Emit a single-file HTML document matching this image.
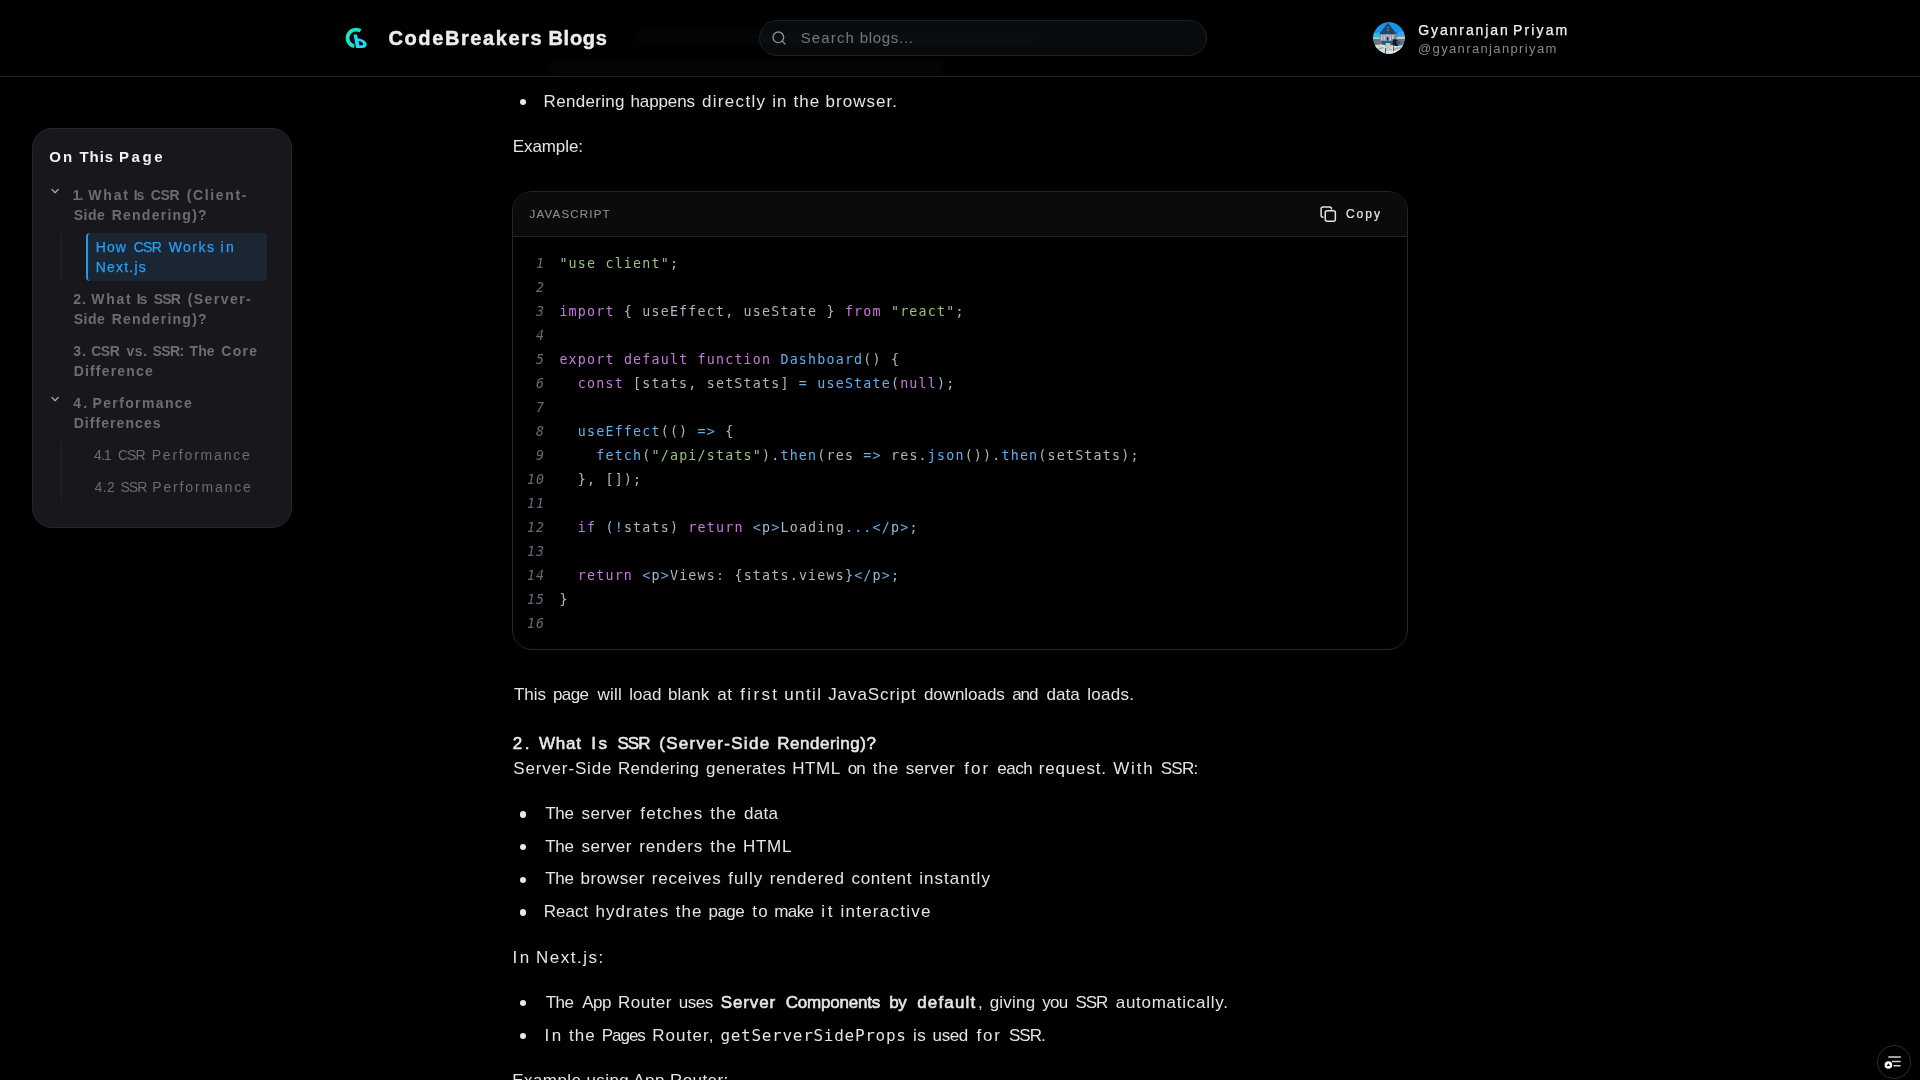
<!DOCTYPE html>
<html lang="en">
<head>
<meta charset="utf-8">
<title>CodeBreakers Blogs</title>
<style>
*{box-sizing:border-box;margin:0;padding:0}
html,body{width:1920px;height:1080px;overflow:hidden;background:#000;color:#ececec;font-family:"Liberation Sans",sans-serif}
body{position:relative}
header{position:absolute;left:0;top:0;width:1920px;height:77px;border-bottom:1px solid #1f2023}
header,main,aside,.fab{will-change:transform}
.ab{position:absolute;white-space:nowrap}
a{color:inherit;text-decoration:none}
ul{list-style:none}
.logo{position:absolute;left:336px;top:18px;width:40px;height:40px}
.brand{font-weight:700;font-size:20px;line-height:24px;color:#ededed;-webkit-text-stroke:.45px #ededed}
.search{position:absolute;left:759px;top:20px;width:448px;height:36px;border:1px solid #1d2025;border-radius:18px;background:rgba(20,27,35,.4)}
.search svg{position:absolute;left:11px;top:9px;width:16px;height:16px}
.srch{font-size:15px;line-height:22px;color:#74787d}
.avatar{position:absolute;left:1373px;top:22px;width:32px;height:32px;border-radius:50%}
.uname{font-size:14px;line-height:20px;color:#f0f0f0;-webkit-text-stroke:.25px #f0f0f0}
.uhandle{font-size:13px;line-height:16px;color:#88888c}
aside{position:absolute;left:32px;top:128px;width:260px;height:400px;border:1px solid #27282c;border-radius:20px;background:#18181c}
.h2{font-size:15px;line-height:24px;font-weight:700;color:#f2f2f2}
.toc{font-size:14px;line-height:20px;font-weight:700;color:#6d6d72}
.toc.sub{font-weight:400;color:#6b6b70}
.toc.act{font-weight:400;color:#2a9df4;-webkit-text-stroke:.25px #2a9df4}
.chev{position:absolute;width:10px;height:8px}
.vline{position:absolute;left:28px;width:1px;background:#222226}
.active{position:absolute;left:53px;top:104px;width:181px;height:48px;border-left:2px solid #1d9bf0;border-radius:4px;background:#1a2633}
main{position:absolute;left:512px;top:0;width:896px;height:1080px;font-size:17px;color:#e4e4e4}
main .t,main .li{white-space:pre;line-height:24px;font-size:17px;font-weight:400}
main .li::before{content:"";position:absolute;left:-24.65px;top:9.3px;width:6.4px;height:6.4px;border-radius:50%;background:#e8e8e8}
.w{position:absolute;top:0;white-space:pre}
main .hd{font-weight:400;-webkit-text-stroke:.55px #ececec}
main .inl{font-family:"DejaVu Sans Mono","Liberation Mono",monospace;font-size:16px}
.cb{position:absolute;left:0;top:191px;width:896px;height:459px;border:1px solid #25262a;border-radius:20px;background:#000;overflow:hidden}
.cbh{position:absolute;left:0;top:0;width:894px;height:45px;border-bottom:1px solid #25262a;background:#0a0b0c}
.lang{font-size:11.5px;line-height:14px;color:#8a8b90;-webkit-text-stroke:.15px #8a8b90}
.copy{position:absolute;left:806.5px;top:13.5px;width:17px;height:17px}
.copyt{font-size:12px;line-height:16px;color:#e6e6e6;-webkit-text-stroke:.2px #e6e6e6}
pre{position:absolute;left:12px;top:59.5px;font-family:"DejaVu Sans Mono","Liberation Mono",monospace;font-size:13.3px;letter-spacing:1.203px;line-height:24px;color:#b0b6c0;white-space:pre}
pre code{font-family:inherit}
pre .n{display:inline-block;width:34.4px;padding-right:14.1px;text-align:right;font-style:italic;color:#646b78}
.k{color:#c678dd}.s{color:#98c379}.f{color:#61afef}.o{color:#61afef}
.smudge{position:absolute;background:rgba(255,255,255,.022);filter:blur(3px);border-radius:6px}
.fab{position:absolute;left:1877px;top:1045px;width:34px;height:34px;border:1px solid #2b2c31;border-radius:50%;background:#000}
.fab svg{position:absolute;left:0;top:0;width:32px;height:32px}
</style>
</head>
<body>
<main>
<article>
<ul>
<li id="p0" class="ab li" style="left:32.50px;top:89.60px"><span class="w" style="left:-0.90px;letter-spacing:0.314px">Rendering </span><span class="w" style="left:86.00px;letter-spacing:-0.121px">happens </span><span class="w" style="left:157.40px;letter-spacing:1.336px">directly </span><span class="w" style="left:227.70px;letter-spacing:1.023px">in </span><span class="w" style="left:248.90px;letter-spacing:1.111px">the </span><span class="w" style="left:281.10px;letter-spacing:1.011px">browser.</span></li>
</ul>
<p id="p1" class="ab t" style="left:0.70px;top:134.70px;letter-spacing:-0.068px">Example:</p>
<section class="cb">
<div class="cbh">
<span id="lang" class="ab lang" style="left:16.60px;top:14.85px;letter-spacing:1.196px">JAVASCRIPT</span>
<span id="copyt" class="ab copyt" style="left:832.90px;top:14.00px;letter-spacing:2.028px">Copy</span>
<svg class="copy" viewBox="0 0 17 17" fill="none" stroke="#e4e4e4" stroke-width="1.5" stroke-linejoin="round" stroke-linecap="round"><rect x="5.25" y="4.85" width="10.1" height="10.3" rx="2" fill="#0a0b0c"/><path d="M3 11.2c-1.1 0-1.9-.8-1.9-1.9V2.9c0-1.1.8-1.9 1.9-1.9h6.6c1.1 0 1.9.8 1.9 1.9"/></svg>
</div>
<pre><code><span class="n">1</span><span class="s">"use client"</span>;
<span class="n">2</span>
<span class="n">3</span><span class="k">import</span> { useEffect, useState } <span class="k">from</span> <span class="s">"react"</span>;
<span class="n">4</span>
<span class="n">5</span><span class="k">export</span> <span class="k">default</span> <span class="k">function</span> <span class="f">Dashboard</span>() {
<span class="n">6</span>  <span class="k">const</span> [stats, setStats] <span class="o">=</span> <span class="f">useState</span>(<span class="k">null</span>);
<span class="n">7</span>
<span class="n">8</span>  <span class="f">useEffect</span>(() <span class="o">=&gt;</span> {
<span class="n">9</span>    <span class="f">fetch</span>(<span class="s">"/api/stats"</span>).<span class="f">then</span>(res <span class="o">=&gt;</span> res.<span class="f">json</span>()).<span class="f">then</span>(setStats);
<span class="n">10</span>  }, []);
<span class="n">11</span>
<span class="n">12</span>  <span class="k">if</span> (<span class="o">!</span>stats) <span class="k">return</span> <span class="o">&lt;</span>p<span class="o">&gt;</span>Loading<span class="o">...</span><span class="o">&lt;/</span>p<span class="o">&gt;</span>;
<span class="n">13</span>
<span class="n">14</span>  <span class="k">return</span> <span class="o">&lt;</span>p<span class="o">&gt;</span>Views<span class="o">:</span> {stats.views}<span class="o">&lt;/</span>p<span class="o">&gt;</span>;
<span class="n">15</span>}
<span class="n">16</span></code></pre>
</section>
<p id="p2" class="ab t" style="left:0.00px;top:682.50px"><span class="w" style="left:1.95px;letter-spacing:-0.005px">This </span><span class="w" style="left:40.95px;letter-spacing:-0.588px">page </span><span class="w" style="left:85.45px;letter-spacing:0.256px">will </span><span class="w" style="left:117.20px;letter-spacing:0.055px">load </span><span class="w" style="left:155.95px;letter-spacing:0.177px">blank </span><span class="w" style="left:205.20px;letter-spacing:0.645px">at </span><span class="w" style="left:228.20px;letter-spacing:2.360px">first </span><span class="w" style="left:272.20px;letter-spacing:1.423px">until </span><span class="w" style="left:316.20px;letter-spacing:0.912px">JavaScript </span><span class="w" style="left:411.95px;letter-spacing:-0.054px">downloads </span><span class="w" style="left:500.17px;letter-spacing:-1.000px">and </span><span class="w" style="left:534.45px;letter-spacing:0.073px">data </span><span class="w" style="left:575.20px;letter-spacing:0.272px">loads.</span></p>
<h3 id="p3" class="ab t hd" style="left:0.00px;top:732.00px"><span class="w" style="left:0.70px;letter-spacing:2.595px">2. </span><span class="w" style="left:26.95px;letter-spacing:0.782px">What </span><span class="w" style="left:79.19px;letter-spacing:2.600px">Is </span><span class="w" style="left:105.51px;letter-spacing:-1.000px">SSR </span><span class="w" style="left:147.20px;letter-spacing:1.326px">(Server-Side </span><span class="w" style="left:265.20px;letter-spacing:0.520px">Rendering)?</span></h3>
<p id="p4" class="ab t" style="left:0.00px;top:756.70px"><span class="w" style="left:1.20px;letter-spacing:0.855px">Server-Side </span><span class="w" style="left:105.95px;letter-spacing:0.327px">Rendering </span><span class="w" style="left:193.95px;letter-spacing:0.530px">generates </span><span class="w" style="left:280.20px;letter-spacing:0.593px">HTML </span><span class="w" style="left:335.77px;letter-spacing:-1.000px">on </span><span class="w" style="left:360.70px;letter-spacing:0.961px">the </span><span class="w" style="left:393.70px;letter-spacing:0.356px">server </span><span class="w" style="left:452.20px;letter-spacing:2.086px">for </span><span class="w" style="left:485.20px;letter-spacing:-0.436px">each </span><span class="w" style="left:526.70px;letter-spacing:0.842px">request. </span><span class="w" style="left:601.20px;letter-spacing:1.852px">With </span><span class="w" style="left:648.70px;letter-spacing:-0.685px">SSR:</span></p>
<ul>
<li id="p5" class="ab li" style="left:32.50px;top:801.90px"><span class="w" style="left:0.70px;letter-spacing:-0.244px">The </span><span class="w" style="left:36.95px;letter-spacing:0.556px">server </span><span class="w" style="left:95.70px;letter-spacing:1.215px">fetches </span><span class="w" style="left:165.70px;letter-spacing:1.086px">the </span><span class="w" style="left:199.45px;letter-spacing:0.273px">data</span></li>
<li id="p6" class="ab li" style="left:32.50px;top:834.50px"><span class="w" style="left:0.70px;letter-spacing:-0.244px">The </span><span class="w" style="left:36.95px;letter-spacing:0.556px">server </span><span class="w" style="left:94.70px;letter-spacing:0.910px">renders </span><span class="w" style="left:165.70px;letter-spacing:1.086px">the </span><span class="w" style="left:198.45px;letter-spacing:0.759px">HTML</span></li>
<li id="p7" class="ab li" style="left:32.50px;top:867.40px"><span class="w" style="left:0.70px;letter-spacing:-0.244px">The </span><span class="w" style="left:35.95px;letter-spacing:0.591px">browser </span><span class="w" style="left:107.20px;letter-spacing:0.828px">receives </span><span class="w" style="left:183.70px;letter-spacing:0.967px">fully </span><span class="w" style="left:225.20px;letter-spacing:0.894px">rendered </span><span class="w" style="left:306.95px;letter-spacing:0.718px">content </span><span class="w" style="left:374.70px;letter-spacing:1.042px">instantly</span></li>
<li id="p8" class="ab li" style="left:32.50px;top:900.00px"><span class="w" style="left:-0.80px;letter-spacing:0.041px">React </span><span class="w" style="left:50.95px;letter-spacing:1.092px">hydrates </span><span class="w" style="left:131.20px;letter-spacing:1.086px">the </span><span class="w" style="left:163.95px;letter-spacing:-0.505px">page </span><span class="w" style="left:207.70px;letter-spacing:1.377px">to </span><span class="w" style="left:229.70px;letter-spacing:-0.589px">make </span><span class="w" style="left:276.81px;letter-spacing:2.600px">it </span><span class="w" style="left:295.95px;letter-spacing:1.253px">interactive</span></li>
</ul>
<p id="p9" class="ab t" style="left:0.00px;top:945.60px"><span class="w" style="left:0.41px;letter-spacing:2.600px">In </span><span class="w" style="left:24.10px;letter-spacing:1.478px">Next.js:</span></p>
<ul>
<li id="p10" class="ab li" style="left:32.50px;top:990.70px"><span class="w" style="left:1.20px;letter-spacing:-0.494px">The </span><span class="w" style="left:37.70px;letter-spacing:-0.472px">App </span><span class="w" style="left:73.45px;letter-spacing:0.497px">Router </span><span class="w" style="left:134.20px;letter-spacing:-0.436px">uses </span><b class="hd"><span class="w" style="left:176.20px;letter-spacing:0.878px">Server </span><span class="w" style="left:241.20px;letter-spacing:-0.204px">Components </span><span class="w" style="left:344.70px;letter-spacing:-0.405px">by </span><span class="w" style="left:372.70px;letter-spacing:1.164px">default</span></b><span class="w" style="left:433.45px;letter-spacing:0.000px">, </span><span class="w" style="left:445.20px;letter-spacing:0.227px">giving </span><span class="w" style="left:497.70px;letter-spacing:-0.677px">you </span><span class="w" style="left:530.91px;letter-spacing:-1.000px">SSR </span><span class="w" style="left:571.20px;letter-spacing:0.735px">automatically.</span></li>
<li id="p11" class="ab li" style="left:32.50px;top:1023.50px"><span class="w" style="left:-0.04px;letter-spacing:2.600px">In </span><span class="w" style="left:24.45px;letter-spacing:1.086px">the </span><span class="w" style="left:57.15px;letter-spacing:-1.000px">Pages </span><span class="w" style="left:107.70px;letter-spacing:1.086px">Router, </span><code class="w inl" style="left:175.90px;letter-spacing:0.714px">getServerSideProps </code><span class="w" style="left:368.45px;letter-spacing:0.573px">is </span><span class="w" style="left:388.10px;letter-spacing:-0.403px">used </span><span class="w" style="left:431.95px;letter-spacing:1.836px">for </span><span class="w" style="left:464.45px;letter-spacing:-0.968px">SSR.</span></li>
</ul>
<p id="p12" class="ab t" style="left:0.30px;top:1068.50px;letter-spacing:0.412px">Example using App Router:</p>
</article>
</main>
<header>
<div class="smudge" style="left:636px;top:32px;width:402px;height:11px"></div>
<div class="smudge" style="left:550px;top:63px;width:394px;height:11px"></div>
<svg class="logo" viewBox="0 0 40 40"><path d="M24.5 12.9A8.4 8.4 0 1 0 18.3 28.2" fill="none" stroke="#1de4c0" stroke-width="3.7"/><path d="M17.5 16.4h3.5l.9 4c3.6 0 8.8 2.3 8.8 6 0 2.4-2 3.5-4.3 3.5h-6.3zM22.6 22.9l.9 4.3h2.4c1.3 0 1.6-1.2.9-2-.9-1.1-2.5-2-4.2-2.3z" fill="#20d8f4" fill-rule="evenodd"/></svg>
<div class="search"><svg viewBox="0 0 24 24" fill="none" stroke="#8c9095" stroke-width="2" stroke-linecap="round"><circle cx="11" cy="11" r="8"/><path d="M21 21l-4.3-4.3"/></svg></div>
<svg class="avatar" viewBox="0 0 32 32"><defs><clipPath id="ac"><circle cx="16" cy="16" r="16"/></clipPath></defs><g clip-path="url(#ac)"><rect width="32" height="32" fill="#1893e8"/><path d="M0 10.5l3.5.8 2.6-1.6 1 2.4-1 3.9H0z" fill="#1cc4e6"/><path d="M25 11l3-1.8 4 .6v5h-7z" fill="#3aa3ea"/><path d="M0 15.6h7v2H0zM24 14.8h8v2.4h-8z" fill="#cfd4d9"/><rect x="0" y="16.8" width="32" height="7" fill="#6e757d"/><path d="M14.8 1L23.9 12H6z" fill="#1b4a70"/><path d="M14 4.9h2v.8h-2zM14 7.8h2v.8h-2z" fill="#a99a86"/><path d="M18.6 6.6l1 .9-1 .5zM18.6 9.8l1 .9-1 .5z" fill="#0e2233"/><rect x="7" y="12" width="16.8" height="7.2" fill="#868d95"/><path d="M8 13.2h1.6v5H8zM10.6 13.2h1.4v5h-1.4zM16.6 13.2h1.4v5h-1.4zM19 13.2h1.6v5H19z" fill="#c4c8cd"/><path d="M12.6 19v-4.4a2 2 0 0 1 4 0V19z" fill="#b9bec4"/><path d="M13.6 19v-3.6a1 1 0 0 1 2 0V19z" fill="#1d5f92"/><rect x="14.2" y="15.8" width="1" height="2" fill="#0d1a26"/><path d="M8.5 19h11v3.4l-4 1.6h-7z" fill="#1d5c8e"/><path d="M19.6 17.2h3.2l2 1.4v5.6h-5.2z" fill="#15181c"/><path d="M23.5 19h4v3h-4z" fill="#1d5c8e"/><path d="M0 23.4l8-1.2 5 1.4 6-.4 5 1 8-1.2V32H0z" fill="#dcdfe2"/><path d="M12.8 21h4.4l1 8h-6.4z" fill="#c3c7cc"/><path d="M4 26l6-1 1 1.2-6 2zM20 27l6-2 3 .6-8 3z" fill="#a4a9af"/><path d="M12 26h.9v5.5H12zM20.2 24.6h.9V29h-.9z" fill="#3a3f45"/><circle cx="6.4" cy="23.4" r=".6" fill="#7ed321"/><circle cx="13.5" cy="24.4" r=".6" fill="#7ed321"/><circle cx="18.4" cy="27.5" r=".6" fill="#7ed321"/></g></svg>
<a id="brand" class="ab brand" style="left:388.00px;top:26.00px"><span class="w" style="left:0.50px;letter-spacing:1.595px">CodeBreakers </span><span class="w" style="left:160.40px;letter-spacing:0.754px">Blogs</span></a>
<span id="srch" class="ab srch" style="left:800.00px;top:26.75px"><span class="w" style="left:0.70px;letter-spacing:1.133px">Search </span><span class="w" style="left:59.70px;letter-spacing:0.701px">blogs...</span></span>
<div id="uname" class="ab uname" style="left:1418.00px;top:20.00px"><span class="w" style="left:0.20px;letter-spacing:1.917px">Gyanranjan </span><span class="w" style="left:95.00px;letter-spacing:2.131px">Priyam</span></div>
<div id="uhandle" class="ab uhandle" style="left:1418.00px;top:40.50px;letter-spacing:1.361px">@gyanranjanpriyam</div>
</header>
<aside>
<h2 id="h2" class="ab h2" style="left:16.00px;top:15.90px"><span class="w" style="left:0.20px;letter-spacing:2.133px">On </span><span class="w" style="left:30.50px;letter-spacing:0.902px">This </span><span class="w" style="left:69.99px;letter-spacing:2.600px">Page</span></h2>
<nav>
<div class="vline" style="top:104px;height:48px"></div>
<div class="vline" style="top:312px;height:60px"></div>
<div class="active"></div>
<svg class="chev" style="left:17px;top:57px" viewBox="0 0 10 8" fill="none" stroke="#a3a3a8" stroke-width="1.3" stroke-linecap="round" stroke-linejoin="round"><path d="M2.07 3.55L5.07 6.7 8.07 3.55"/></svg>
<svg class="chev" style="left:17px;top:265.2px" viewBox="0 0 10 8" fill="none" stroke="#a3a3a8" stroke-width="1.3" stroke-linecap="round" stroke-linejoin="round"><path d="M2.07 3.55L5.07 6.7 8.07 3.55"/></svg>
<a id="t1a" class="ab toc" style="left:40.00px;top:55.70px"><span class="w" style="left:-0.19px;letter-spacing:-1.000px">1. </span><span class="w" style="left:15.30px;letter-spacing:1.816px">What </span><span class="w" style="left:60.68px;letter-spacing:-1.000px">Is </span><span class="w" style="left:77.80px;letter-spacing:-0.349px">CSR </span><span class="w" style="left:113.70px;letter-spacing:1.635px">(Client-</span></a>
<a id="t1b" class="ab toc" style="left:40.00px;top:75.70px"><span class="w" style="left:0.70px;letter-spacing:0.524px">Side </span><span class="w" style="left:38.70px;letter-spacing:1.246px">Rendering)?</span></a>
<a id="a1" class="ab toc act" style="left:63.00px;top:107.50px"><span class="w" style="left:-0.30px;letter-spacing:1.102px">How </span><span class="w" style="left:37.70px;letter-spacing:-0.674px">CSR </span><span class="w" style="left:72.70px;letter-spacing:1.460px">Works </span><span class="w" style="left:124.45px;letter-spacing:2.490px">in</span></a>
<a id="a2" class="ab toc act" style="left:63.00px;top:127.50px"><span class="w" style="left:-0.30px;letter-spacing:1.219px">Next.js</span></a>
<a id="t2a" class="ab toc" style="left:40.00px;top:159.90px"><span class="w" style="left:0.30px;letter-spacing:0.964px">2. </span><span class="w" style="left:18.20px;letter-spacing:1.766px">What </span><span class="w" style="left:63.68px;letter-spacing:-1.000px">Is </span><span class="w" style="left:80.70px;letter-spacing:-0.788px">SSR </span><span class="w" style="left:114.70px;letter-spacing:1.442px">(Server-</span></a>
<a id="t2b" class="ab toc" style="left:40.00px;top:179.90px"><span class="w" style="left:0.70px;letter-spacing:0.524px">Side </span><span class="w" style="left:38.70px;letter-spacing:1.246px">Rendering)?</span></a>
<a id="t3a" class="ab toc" style="left:40.00px;top:211.90px"><span class="w" style="left:0.30px;letter-spacing:0.964px">3. </span><span class="w" style="left:18.20px;letter-spacing:-0.424px">CSR </span><span class="w" style="left:53.45px;letter-spacing:0.639px">vs. </span><span class="w" style="left:79.45px;letter-spacing:-0.562px">SSR: </span><span class="w" style="left:116.60px;letter-spacing:0.048px">The </span><span class="w" style="left:148.20px;letter-spacing:1.330px">Core</span></a>
<a id="t3b" class="ab toc" style="left:40.00px;top:231.90px"><span class="w" style="left:0.70px;letter-spacing:1.169px">Difference</span></a>
<a id="t4a" class="ab toc" style="left:40.00px;top:263.90px"><span class="w" style="left:0.30px;letter-spacing:2.214px">4. </span><span class="w" style="left:19.45px;letter-spacing:1.379px">Performance</span></a>
<a id="t4b" class="ab toc" style="left:40.00px;top:283.90px"><span class="w" style="left:0.70px;letter-spacing:1.063px">Differences</span></a>
<a id="s41" class="ab toc sub" style="left:61.00px;top:316.10px"><span class="w" style="left:0.11px;letter-spacing:-1.000px">4.1 </span><span class="w" style="left:23.95px;letter-spacing:-0.999px">CSR </span><span class="w" style="left:57.70px;letter-spacing:1.799px">Performance</span></a>
<a id="s42" class="ab toc sub" style="left:61.00px;top:348.00px"><span class="w" style="left:0.60px;letter-spacing:0.387px">4.2 </span><span class="w" style="left:26.54px;letter-spacing:-1.000px">SSR </span><span class="w" style="left:58.30px;letter-spacing:1.839px">Performance</span></a>
</nav>
</aside>
<div class="fab"><svg viewBox="0 0 32 32" fill="none" stroke="#d2d2d6" stroke-width="1.5" stroke-linecap="round"><path d="M10.85 11.1h11.5M14.45 15.4h7.6M16.05 19.7h6"/><circle cx="10.4" cy="19" r="3.8" fill="#fff" stroke="none"/><path d="M10.4 17.2l1.7 2.9h-3.4z" fill="#000" stroke="none"/></svg></div>
</body>
</html>
